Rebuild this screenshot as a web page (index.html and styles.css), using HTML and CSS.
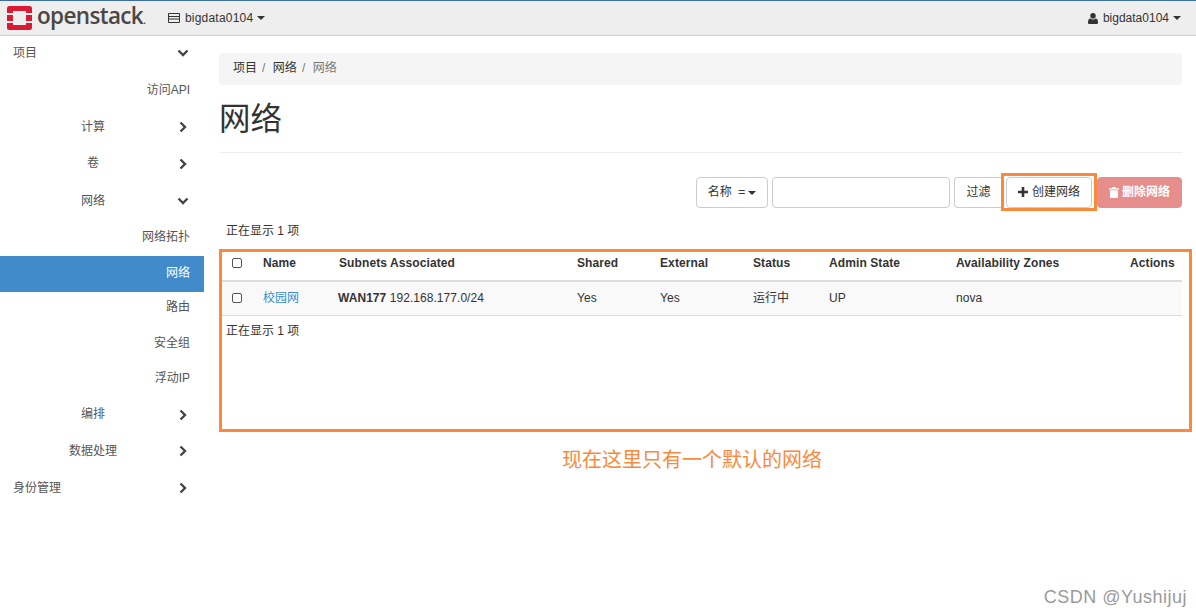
FILE: index.html
```html
<!DOCTYPE html>
<html lang="zh">
<head>
<meta charset="utf-8">
<title>网络</title>
<link rel="stylesheet" href="styles.css">
</head>
<body>
<header class="navbar">
  <div class="brand">
    <svg class="logo" width="25" height="24" viewBox="0 0 25 24"><path fill="#da1a32" fill-rule="evenodd" d="M2.500 0h20A2.500 2.500 0 0 1 25 2.500V7h-6V5H6v2H0V2.500A2.500 2.500 0 0 1 2.500 0zM0 9h6v6H0zM19 9h6v6h-6zM0 17h6v2h13v-2h6v4.500a2.500 2.500 0 0 1-2.500 2.500h-20A2.500 2.500 0 0 1 0 21.500z"/></svg>
    <span class="brand-name">openstack<span class="brand-dot">.</span></span>
  </div>
  <div class="nav-project">
    <svg class="nav-icon" width="12" height="10" viewBox="0 0 12 10"><path fill="#333" fill-rule="evenodd" d="M1 0h10a1 1 0 0 1 1 1v8a1 1 0 0 1-1 1H1a1 1 0 0 1-1-1V1a1 1 0 0 1 1-1zm0 1v2h10V1zm0 3v1.500h10V4zm0 2.500V9h10V6.500z"/></svg>
    <span class="nav-text">bigdata0104</span><i class="caret"></i>
  </div>
  <div class="nav-user">
    <svg class="nav-icon" width="10" height="11" viewBox="0 0 10 11"><path fill="#333" d="M5 0a2.700 2.700 0 0 1 2.700 2.800A2.700 2.700 0 0 1 5 5.600a2.700 2.700 0 0 1-2.700-2.800A2.700 2.700 0 0 1 5 0zM2.400 5.600C3 6.200 4 6.500 5 6.500s2-.3 2.600-.9C9.200 5.800 10 7 10 9.500c0 1-.6 1.500-1.500 1.500h-7C.6 11 0 10.500 0 9.500 0 7 .8 5.800 2.400 5.600z"/></svg>
    <span>bigdata0104</span><i class="caret"></i>
  </div>
</header>
<div class="layout">
  <nav class="sidebar">
    <div class="item top"><span class="label">项目</span><svg class="chev" width="12" height="12" viewBox="0 0 12 12"><path d="M1.500 3.500 6 8l4.500-4.500" fill="none" stroke="#444" stroke-width="2.400"/></svg></div>
    <div class="item sub first">访问API</div>
    <div class="item group"><span class="label">计算</span><svg class="chev" width="12" height="12" viewBox="0 0 12 12"><path d="M3.500 1.500 8 6l-4.500 4.500" fill="none" stroke="#444" stroke-width="2.400"/></svg></div>
    <div class="item group"><span class="label">卷</span><svg class="chev" width="12" height="12" viewBox="0 0 12 12"><path d="M3.500 1.500 8 6l-4.500 4.500" fill="none" stroke="#444" stroke-width="2.400"/></svg></div>
    <div class="item group open"><span class="label">网络</span><svg class="chev" width="12" height="12" viewBox="0 0 12 12"><path d="M1.500 3.500 6 8l4.500-4.500" fill="none" stroke="#444" stroke-width="2.400"/></svg></div>
    <div class="item sub">网络拓扑</div>
    <div class="item sub active">网络</div>
    <div class="item sub after-active">路由</div>
    <div class="item sub">安全组</div>
    <div class="item sub">浮动IP</div>
    <div class="item group"><span class="label">编排</span><svg class="chev" width="12" height="12" viewBox="0 0 12 12"><path d="M3.500 1.500 8 6l-4.500 4.500" fill="none" stroke="#444" stroke-width="2.400"/></svg></div>
    <div class="item group"><span class="label">数据处理</span><svg class="chev" width="12" height="12" viewBox="0 0 12 12"><path d="M3.500 1.500 8 6l-4.500 4.500" fill="none" stroke="#444" stroke-width="2.400"/></svg></div>
    <div class="item top"><span class="label">身份管理</span><svg class="chev" width="12" height="12" viewBox="0 0 12 12"><path d="M3.500 1.500 8 6l-4.500 4.500" fill="none" stroke="#444" stroke-width="2.400"/></svg></div>
  </nav>
  <main class="content">
    <div class="breadcrumb"><span>项目</span><span class="sep">/</span><span>网络</span><span class="sep">/</span><span class="current">网络</span></div>
    <h1 class="title">网络</h1>
    <div class="actions">
      <div class="btn filter-field">名称&nbsp; =<i class="caret dark"></i></div>
      <div class="filter-input"></div>
      <div class="btn filter-go">过滤</div>
      <div class="btn create"><svg class="plus" width="10" height="10" viewBox="0 0 10 10"><path d="M5 0v10M0 5h10" stroke="#333" stroke-width="2.600"/></svg>创建网络</div>
      <div class="btn delete"><svg width="10" height="11" viewBox="0 0 10 11"><path fill="#fff" d="M3.500 0h3l.5 1.300h3v1.200H0V1.300h3zM1 3.200h8V10a1 1 0 0 1-1 1H2a1 1 0 0 1-1-1z"/></svg>删除网络</div>
    </div>
    <div class="count">正在显示 <b>1</b> 项</div>
    <table class="grid">
      <colgroup><col class="c1"><col class="c2"><col class="c3"><col class="c4"><col class="c5"><col class="c6"><col class="c7"><col class="c8"><col class="c9"></colgroup>
      <thead>
        <tr><th><span class="check"></span></th><th>Name</th><th>Subnets Associated</th><th>Shared</th><th>External</th><th>Status</th><th>Admin State</th><th>Availability Zones</th><th>Actions</th></tr>
      </thead>
      <tbody>
        <tr><td><span class="check"></span></td><td><a class="link">校园网</a></td><td><b>WAN177</b> 192.168.177.0/24</td><td>Yes</td><td>Yes</td><td>运行中</td><td>UP</td><td>nova</td><td></td></tr>
      </tbody>
    </table>
    <div class="count after">正在显示 <b>1</b> 项</div>
  </main>
</div>
<div class="mark mark-create"></div>
<div class="mark mark-table"></div>
<div class="note">现在这里只有一个默认的网络</div>
<div class="watermark">CSDN @Yushijuj</div>
</body>
</html>
```
FILE: styles.css
```css
* { box-sizing: border-box; }
html, body { margin: 0; height: 100%; }
body {
  position: relative;
  width: 1196px;
  height: 616px;
  overflow: hidden;
  background: #fff;
  color: #333;
  font: 12px/17px "Liberation Sans", "Noto Sans CJK SC", sans-serif;
}
.navbar {
  display: flex;
  align-items: center;
  height: 36px;
  background: #eeeeee;
  border-top: 1px solid #3a6f9f;
  border-bottom: 1px solid #cfcfcf;
  padding: 0 15px 0 7px;
}
.brand { display: flex; align-items: center; width: 161px; }
.logo { flex: none; }
.brand-name {
  margin-left: 5px;
  font: 600 22.500px/25px "Open Sans", sans-serif;
  letter-spacing: -.65px;
  color: #4c4744;
}
.brand-dot { font-size: 10px; }
.nav-project { display: flex; align-items: center; gap: 5px; }
.nav-user { display: flex; align-items: center; gap: 5px; margin-left: auto; }
.nav-text { letter-spacing: .2px; }
.caret {
  display: inline-block;
  width: 0;
  height: 0;
  margin-left: -1px;
  border: 4px solid transparent;
  border-top-color: #333;
  border-bottom: 0;
}
.layout { display: flex; }
.sidebar { flex: none; width: 204px; color: #555; }
.item { display: flex; align-items: center; height: 36.700px; padding-bottom: 2px; }
.top { padding-left: 13px; justify-content: space-between; padding-right: 15px; height: 36.800px; }
.group { justify-content: flex-end; padding-right: 15px; }
.group .label { width: 48px; text-align: center; margin-right: 60px; }
.group.open { height: 37.700px; }
.sub { justify-content: flex-end; padding-right: 14px; height: 35.500px; }
.sub.first { height: 37px; }
.active { background: #428bca; color: #fff; height: 36px; }
.sub.after-active { height: 34px; padding-bottom: 4px; }
.chev { flex: none; }
.content { flex: none; width: 963px; margin-left: 15px; padding-top: 17px; }
.breadcrumb {
  display: flex;
  height: 32px;
  align-items: center;
  padding: 0 0 2px 14px;
  background: #f5f5f5;
  border-radius: 4px;
}
.sep { margin: 0 7.500px 0 5px; color: #777; }
.current { color: #777; }
.title {
  margin: 14px 0 0;
  height: 54px;
  font-size: 31.500px;
  line-height: 40px;
  font-weight: 400;
  color: #333;
  border-bottom: 1px solid #eee;
}
.actions { display: flex; align-items: center; gap: 4px; margin-top: 24px; height: 31px; padding-left: 477px; }
.btn {
  display: flex;
  flex: none;
  align-items: center;
  justify-content: center;
  height: 31px;
  border: 1px solid #ccc;
  border-radius: 4px;
  background: #fff;
}
.filter-field { width: 72px; gap: 3px; }
.filter-field .caret { margin-left: 0; }
.filter-input { flex: none; width: 178px; height: 31px; border: 1px solid #ccc; border-radius: 4px; }
.filter-go { width: 48px; border-radius: 4px 0 0 4px; border-right: 0; }
.create { width: 86px; gap: 4px; }
.plus { margin-top: -2px; }
.delete { width: 85px; gap: 3px; margin-left: 1px; background: #e58e8c; border-color: #e58e8c; color: #fff; font-weight: 700; }
.count { margin: 15px 0 0 7px; height: 17px; }
.count b { font-weight: 400; color: #333; }
.grid { width: 963px; margin-top: 9px; border-collapse: collapse; table-layout: fixed; }
.c1 { width: 31px; } .c2 { width: 76px; } .c3 { width: 238px; } .c4 { width: 83px; }
.c5 { width: 93px; } .c6 { width: 76px; } .c7 { width: 127px; } .c8 { width: 174px; } .c9 { width: 65px; }
th {
  height: 32px;
  padding: 0 0 3px 13px;
  text-align: left;
  font-weight: 700;
  color: #333;
  letter-spacing: .1px;
  white-space: nowrap;
  border-bottom: 2px solid #ddd;
}
td {
  height: 34px;
  padding: 0 0 0 13px;
  background: #f9f9f9;
  border-bottom: 1px solid #ddd;
  white-space: nowrap;
  letter-spacing: .05px;
}
td:nth-child(3) { padding-left: 12px; }
.check {
  display: block;
  width: 10px;
  height: 10px;
  border: 1px solid #555;
  border-radius: 2px;
  background: #fff;
}
.link { color: #428bca; }
.count.after { margin-top: 7px; }
.mark { position: absolute; border: 3px solid #f98a3b; }
.mark-create { left: 1001px; top: 173px; width: 96px; height: 38px; }
.mark-table { left: 219px; top: 249px; width: 973px; height: 183px; }
.note { position: absolute; left: 562px; top: 447px; font-size: 20px; line-height: 26px; color: #f98a3b; }
.watermark { position: absolute; right: 9px; top: 586px; font-size: 18px; line-height: 22px; color: #9a9a9a; letter-spacing: .5px; }
```
